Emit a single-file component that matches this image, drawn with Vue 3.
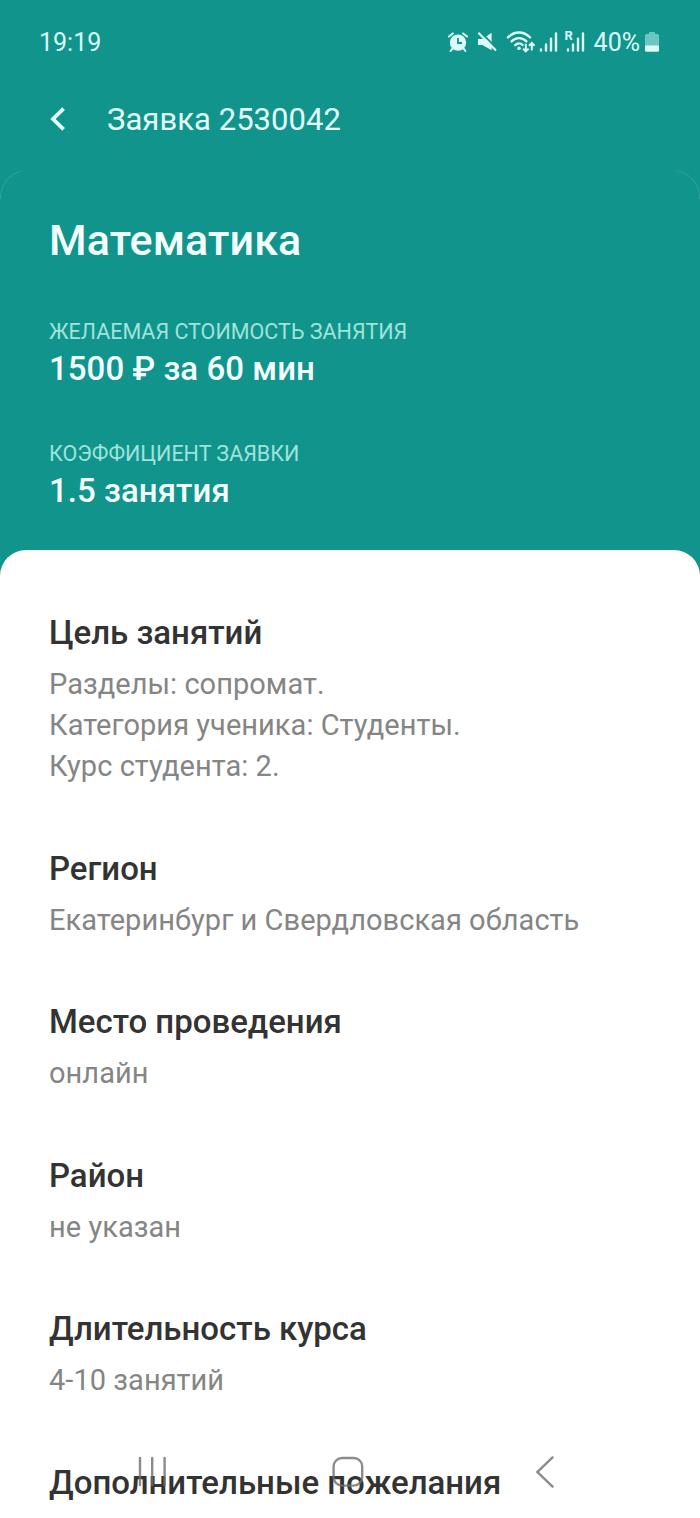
<template>
  <div class="screen">
    <header class="status-bar">
      <span class="time">19:19</span>
      <div class="status-icons">
        <svg class="alarm" width="20" height="20" viewBox="0 0 20 20">
          <circle cx="10" cy="10.6" r="8.2" fill="currentColor" />
          <path d="M1 4.6 4.8 1.4M19 4.6 15.2 1.4M4.4 16.6 2.6 19M15.6 16.6 17.4 19" stroke="currentColor" stroke-width="2" stroke-linecap="round" />
          <path d="M10 6v5h4" fill="none" stroke="#10948c" stroke-width="1.8" />
        </svg>
        <svg class="mute" width="20" height="20" viewBox="0 0 20 20">
          <path d="M1 7h4.4L14.6.8v17.4L5.4 13H1z" fill="currentColor" />
          <path d="M3.2-.2 20.4 17" stroke="#10948c" stroke-width="2" />
          <path d="M1.4.8 19 18.6" stroke="currentColor" stroke-width="2.2" />
        </svg>
        <svg class="wifi" width="30" height="24" viewBox="0 0 30 24">
          <g fill="none" stroke="currentColor" stroke-width="2.4" stroke-linecap="round">
            <path d="M2 7.4c6.4-6.6 15.6-6.6 22 0" />
            <path d="M5.6 11.4c4.2-4.4 10.6-4.4 14.8 0" />
            <path d="M9.2 15.2c2.2-2.2 5.4-2.2 7.4-.2" />
          </g>
          <circle cx="13" cy="18.2" r="1.8" fill="currentColor" />
          <path d="M19.8 13.8v7.6M17 18.6l2.8 2.8 2.8-2.8M25.8 20.4v-7.2M23 15.8l2.8-2.8 2.8 2.8" fill="none" stroke="currentColor" stroke-width="2" />
        </svg>
        <svg class="signal" width="20" height="22" viewBox="0 0 20 22">
          <path d="M2 18.4v1.2M7 13.4v6.2M12 7.6v12M17 2.4v17.2" stroke="currentColor" stroke-width="2.4" stroke-linecap="round" />
        </svg>
        <div class="roaming">
          <svg width="22" height="22" viewBox="0 0 22 22">
            <path d="M4 18.4v1.2M9 13.4v6.2M14 7.6v12M19 2.4v17.2" stroke="currentColor" stroke-width="2.4" stroke-linecap="round" />
          </svg>
          <span>R</span>
        </div>
        <span class="charge">40%</span>
        <svg class="battery" width="14" height="20" viewBox="0 0 14 20">
          <path d="M4 0h6v2h2.4Q14 2 14 3.8V14H0V3.8Q0 2 1.6 2H4z" fill="#6cc5be" />
          <path d="M0 13.4h14v4.8q0 1.6-1.6 1.6H1.6Q0 19.8 0 18.2z" fill="currentColor" />
        </svg>
      </div>
    </header>

    <div class="toolbar">
      <button type="button" class="back" aria-label="Назад">
        <svg width="18" height="26" viewBox="0 0 18 26">
          <path d="M14.6 2.6 4 13l10.6 10.4" fill="none" stroke="currentColor" stroke-width="3.8" />
        </svg>
      </button>
      <span class="toolbar-title">Заявка 2530042</span>
    </div>

    <section class="summary">
      <h1>Математика</h1>
      <div v-for="fact in facts" :key="fact.label" class="fact">
        <div class="label">{{ fact.label }}</div>
        <div class="value">{{ fact.value }}</div>
      </div>
    </section>

    <main class="sheet">
      <section v-for="item in details" :key="item.title" class="detail">
        <h2>{{ item.title }}</h2>
        <p v-for="line in item.lines" :key="line">{{ line }}</p>
      </section>
    </main>

    <nav class="system-nav">
      <svg width="32" height="32" viewBox="0 0 32 32">
        <path d="M4 2v27M16.2 2v27M28.6 2v27" />
      </svg>
      <svg class="home" width="32" height="32" viewBox="0 0 32 32">
        <rect x="1.6" y="2" width="28.6" height="27.6" rx="8.5" />
      </svg>
      <svg width="20" height="34" viewBox="0 0 20 34">
        <path d="M17.6 2.4 2.4 17l15.2 14.6" />
      </svg>
    </nav>
  </div>
</template>

<script setup>
const facts = [
  { label: 'ЖЕЛАЕМАЯ СТОИМОСТЬ ЗАНЯТИЯ', value: '1500 ₽ за 60 мин' },
  { label: 'КОЭФФИЦИЕНТ ЗАЯВКИ', value: '1.5 занятия' },
];

const details = [
  {
    title: 'Цель занятий',
    lines: ['Разделы: сопромат.', 'Категория ученика: Студенты.', 'Курс студента: 2.'],
  },
  { title: 'Регион', lines: ['Екатеринбург и Свердловская область'] },
  { title: 'Место проведения', lines: ['онлайн'] },
  { title: 'Район', lines: ['не указан'] },
  { title: 'Длительность курса', lines: ['4-10 занятий'] },
  { title: 'Дополнительные пожелания', lines: [] },
];
</script>

<style>
body {
  margin: 0;
  background: #10948c;
}
</style>

<style scoped>
.screen {
  position: relative;
  display: flex;
  flex-direction: column;
  height: 1518px;
  overflow: hidden;
  background: #10948c;
  color: #e4fffc;
  font-family: Roboto, 'Noto Sans', sans-serif;
}

.status-bar {
  display: flex;
  flex: none;
  justify-content: space-between;
  align-items: center;
  height: 84px;
  padding: 0 41px 0 39px;
  color: #dcfbf7;
}

.time {
  font-size: 25px;
}

.status-icons {
  display: flex;
  align-items: center;
}

.mute {
  margin-left: 9px;
}

.wifi {
  margin-left: 9px;
}

.signal {
  margin-left: 3px;
}

.roaming {
  position: relative;
  display: flex;
  margin-left: 5px;
}

.roaming span {
  position: absolute;
  top: 0;
  left: 1px;
  padding-bottom: 2px;
  background: #10948c;
  font-size: 13px;
  font-weight: 700;
  line-height: 10px;
}

.charge {
  margin-left: 8px;
  font-size: 25px;
}

.battery {
  margin-left: 5px;
}

.toolbar {
  display: flex;
  flex: none;
  align-items: center;
  height: 70px;
  padding-left: 49px;
}

.back {
  display: flex;
  padding: 0;
  border: 0;
  background: none;
  color: inherit;
}

.toolbar-title {
  margin-left: 40px;
  font-size: 31px;
  letter-spacing: 0.05px;
}

.summary {
  position: relative;
  flex: none;
  box-sizing: border-box;
  height: 379px;
  margin-top: 17px;
  padding: 43px 49px 0;
}

/* faint outline, visible only around the two top corners */
.summary::before {
  content: '';
  position: absolute;
  top: -1px;
  right: 0;
  left: 0;
  height: 28px;
  border: 1px solid rgba(255, 255, 255, 0.16);
  border-bottom: 0;
  border-radius: 27px 27px 0 0;
  mask-image: linear-gradient(to right, #000 18px, transparent 27px calc(100% - 27px), #000 calc(100% - 18px));
}

h1 {
  margin: 0 0 51px;
  color: #f2fffe;
  font-size: 43px;
  font-weight: 500;
  line-height: 52px;
  letter-spacing: 0.1px;
}

.fact {
  margin-bottom: 48px;
}

.label {
  color: #9fe3dc;
  font-size: 21.5px;
  line-height: 30px;
}

.value {
  color: #f2fffe;
  font-size: 33px;
  font-weight: 500;
  line-height: 44px;
  letter-spacing: 0.05px;
}

.sheet {
  flex: 1;
  padding: 63px 49px 0;
  border-radius: 26px 26px 0 0;
  background: #fff;
}

.detail {
  margin-bottom: 61.6px;
}

h2 {
  margin: 0 0 11px;
  color: #333;
  font-size: 33px;
  font-weight: 500;
  line-height: 40px;
  letter-spacing: -0.02px;
  white-space: nowrap;
}

p {
  margin: 0;
  color: #858585;
  font-size: 29px;
  line-height: 41px;
  letter-spacing: 0.04px;
}

.system-nav {
  position: absolute;
  right: 0;
  bottom: 29px;
  left: 0;
  display: flex;
  align-items: center;
  padding-left: 136px;
}

.system-nav svg {
  flex: none;
  fill: none;
  stroke: rgba(110, 110, 110, 0.8);
  stroke-width: 2.4;
  stroke-linecap: round;
}

.system-nav .home {
  margin: 0 171px 0 164px;
}
</style>
